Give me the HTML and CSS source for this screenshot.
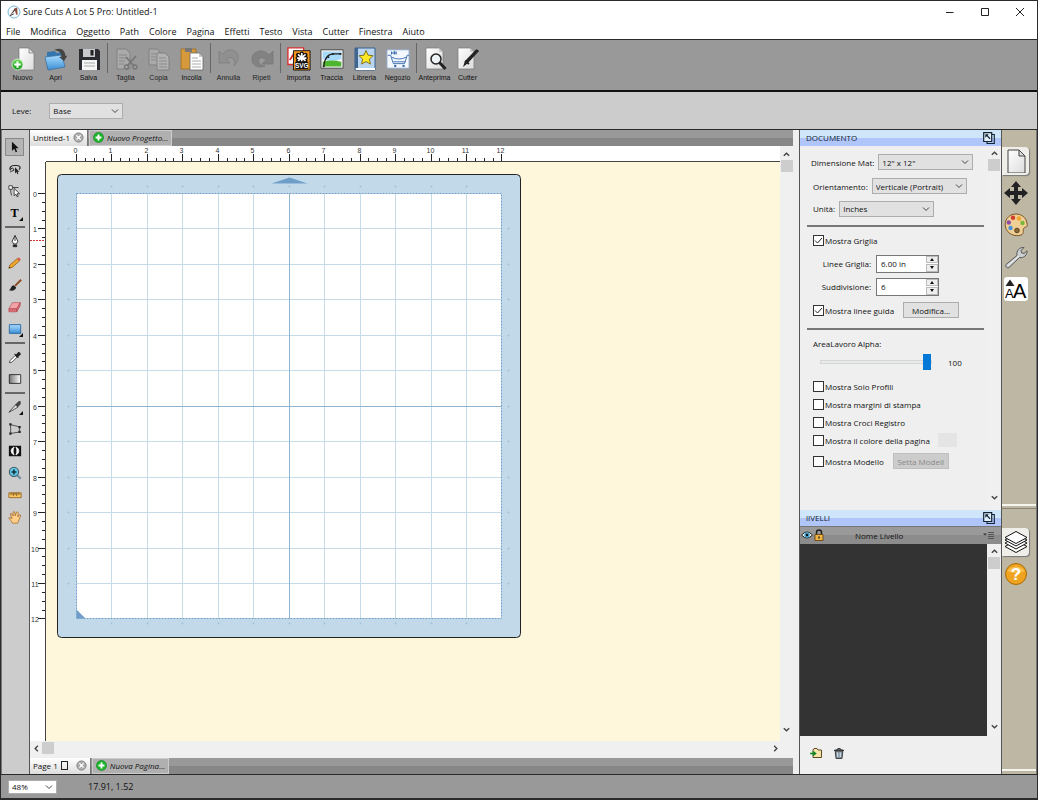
FILE: index.html
```html
<!DOCTYPE html>
<html lang="it">
<head>
  <meta charset="UTF-8" />
  <meta name="viewport" content="width=device-width, initial-scale=1.0"/>
  <title>Sure Cuts A Lot 5 Pro: Untitled-1</title>
  <link rel="stylesheet" href="styles.css">
</head>
<body>
  <!-- shared shapes -->
  <svg class="defs" width="0" height="0" aria-hidden="true">
    <defs>
      <linearGradient id="paper" x1="0" y1="0" x2="1" y2="1"><stop offset="0" stop-color="#fff"/><stop offset="1" stop-color="#dcdcdc"/></linearGradient>
      <linearGradient id="green" x1="0" y1="0" x2="0" y2="1"><stop offset="0" stop-color="#6fe05a"/><stop offset="1" stop-color="#14931c"/></linearGradient>
      <linearGradient id="blue" x1="0" y1="0" x2="0" y2="1"><stop offset="0" stop-color="#a9dcff"/><stop offset="1" stop-color="#3d8fd6"/></linearGradient>
      <linearGradient id="gray" x1="0" y1="0" x2="1" y2="0"><stop offset="0" stop-color="#777"/><stop offset="1" stop-color="#fff"/></linearGradient>
      <symbol id="close" viewBox="0 0 12 12"><circle cx="6" cy="6" r="5" fill="#b9b9b9" stroke="#777"/><path d="M3.7 3.7l4.6 4.6M8.3 3.7l-4.6 4.6" stroke="#777" stroke-width="3"/><path d="M3.7 3.7l4.6 4.6M8.3 3.7l-4.6 4.6" stroke="#fff" stroke-width="1.6"/></symbol>
      <symbol id="plus" viewBox="0 0 12 12"><circle cx="6" cy="6" r="5.5" fill="#1db52c" stroke="#0d7a1a" stroke-width=".6"/><path d="M6 2.8v6.4M2.8 6h6.4" stroke="#fff" stroke-width="2"/></symbol>
      <symbol id="undock" viewBox="0 0 12 12"><path d="M9 2.5h2.3v9H4V10" fill="none" stroke="#123" stroke-width="1.1"/><path d="M.7.7h8v8.8h-8z" fill="#e4f0fb" stroke="#123" stroke-width="1.2"/><path d="M2.3 2.300h3.400L4.700 3.400l2.800 2.900-.9.9-2.800-2.900-1.500 1.400z" fill="#123"/></symbol>
      <symbol id="up" viewBox="0 0 10 10"><path d="M2 6.5l3-3 3 3" fill="none" stroke="#444" stroke-width="1.5"/></symbol>
      <symbol id="down" viewBox="0 0 10 10"><path d="M2 3.5l3 3 3-3" fill="none" stroke="#444" stroke-width="1.5"/></symbol>
    </defs>
  </svg>

  <div class="window">
    <header class="title-bar">
      <svg class="app-icon" viewBox="0 0 14 14"><circle cx="7" cy="7" r="6" fill="#f4fafd" stroke="#79b9d4"/><path d="M3 10.5L8 3l1.600 1z" fill="#5a3328"/><path d="M7.600 4l2.600-1.600.3 7.600-1.400-.4z" fill="#8c4a38"/><path d="M3 10.600l3.800-1.800" stroke="#333"/></svg>
      <span class="title">Sure Cuts A Lot 5 Pro: Untitled-1</span>
      <div class="window-buttons">
        <button aria-label="Riduci"><svg viewBox="0 0 10 10"><path d="M1 5.5h7.5" stroke="#222"/></svg></button>
        <button aria-label="Ingrandisci"><svg viewBox="0 0 10 10"><path d="M1.5 1.5h7v7h-7z" fill="none" stroke="#222"/></svg></button>
        <button aria-label="Chiudi"><svg viewBox="0 0 10 10"><path d="M1 1l8 8M9 1L1 9" stroke="#222"/></svg></button>
      </div>
    </header>

    <nav class="menu-bar">
      <button>File</button><button>Modifica</button><button>Oggetto</button><button>Path</button><button>Colore</button><button>Pagina</button><button>Effetti</button><button>Testo</button><button>Vista</button><button>Cutter</button><button>Finestra</button><button>Aiuto</button>
    </nav>

    <div class="toolbar">
      <button><svg viewBox="0 0 24 24"><path d="M8 1h10l5 5v17H8z" fill="url(#paper)" stroke="#777" stroke-width=".7"/><path d="M18 1v5h5z" fill="#ddd" stroke="#777" stroke-width=".7"/><circle cx="6.500" cy="17.500" r="5.500" fill="url(#green)" stroke="#e4f3dd" stroke-width=".8"/><path d="M6.500 14.300v6.400M3.300 17.500h6.400" stroke="#fff" stroke-width="2"/></svg>Nuovo</button>
      <button><svg viewBox="0 0 24 24"><path d="M3 5l8-1 1 2 8-1v15L3 22z" fill="#3576ae"/><path d="M1 10l17-2 3 12-17 3z" fill="url(#blue)" stroke="#376c9c" stroke-width=".7"/><path d="M10 3c7-3 11 0 11.500 6l2-.4L20 14l-5-4 2.500-.4C17 5.500 15 3.500 10 3z" fill="#444"/></svg>Apri</button>
      <button><svg viewBox="0 0 24 24"><path d="M2 2h19l2 2v19H2z" fill="#2b2c31"/><path d="M6 2h12v8H6z" fill="#c8cacd"/><path d="M13.500 3h3v5.500h-3z" fill="#222"/><path d="M5 13h15v10H5z" fill="#f5f5f5"/><path d="M7 16h11M7 19h11" stroke="#aaa"/></svg>Salva</button>
      <span class="sep"></span>
      <button disabled><svg viewBox="0 0 24 24"><path d="M3 2h9l4 4v16H3z" fill="#aaa" stroke="#818181"/><path d="M5 8h8M5 11h8M5 14h6M5 17h5" stroke="#888"/><path d="M22 9l-9 10M12 10l8 9" stroke="#777" stroke-width="1.800"/><circle cx="12.500" cy="20" r="2" fill="none" stroke="#777" stroke-width="1.400"/><circle cx="21" cy="20" r="2" fill="none" stroke="#777" stroke-width="1.400"/></svg>Taglia</button>
      <button disabled><svg viewBox="0 0 24 24"><path d="M2 2h8l3 3v13H2z" fill="#aaa" stroke="#818181"/><path d="M10 6h8l4 4v13H10z" fill="#b2b2b2" stroke="#818181"/><path d="M4 7h5M4 10h5M4 13h5M12 11h7M12 14h8M12 17h8M12 20h8" stroke="#8b8b8b"/></svg>Copia</button>
      <button><svg viewBox="0 0 24 24"><path d="M1 2h15v20H1z" fill="#d69a3c" stroke="#a36c1c" stroke-width=".8"/><path d="M5 1h7v4H5z" fill="#777"/><path d="M10 6h9l4 4v13H10z" fill="#fff" stroke="#666" stroke-width=".8"/><path d="M19 6v4h4z" fill="#ccc"/><path d="M12 11h6M12 14h9M12 17h9M12 20h9" stroke="#aaa"/></svg>Incolla</button>
      <span class="sep"></span>
      <button disabled><svg viewBox="0 0 24 24"><path d="M2 4v12h11l-3.500-3.500C14 8 19 11 17 19c7-7 5-16-4-16-3 0-5 1-7.500 4.500z" fill="#909090" stroke="#7f7f7f" stroke-width=".8"/></svg>Annulla</button>
      <button disabled><svg viewBox="0 0 24 24"><path d="M23 4v13H12l4-4c-4-4-9-2-7 3 1 2 3 3 6 3-7 3-14-1-13-8 1-7 11-10 17-3z" fill="#828282" stroke="#777" stroke-width=".8"/></svg>Ripeti</button>
      <span class="sep"></span>
      <button><svg viewBox="0 0 26 26"><path d="M1 1h17v18H1z" fill="#fff" stroke="#d93131" stroke-width="1.500"/><path d="M3 14L9 5" stroke="#d93131" stroke-width="2"/><path d="M7 4h18v21H7z" fill="#f39419" stroke="#111"/><path d="M16 7v8M12 8.500l8 6M20 8.500l-8 6M11.500 12h9" stroke="#111" stroke-width="4.500" stroke-linecap="round"/><path d="M16 7v8M12.500 8.500l7 6M19.500 8.500l-7 6M11.500 12h9" stroke="#fff" stroke-width="1.800" stroke-linecap="round"/><path d="M9 16h14v8H9z" fill="#111"/><text x="16" y="23" text-anchor="middle" class="svg-logo">SVG</text></svg>Importa</button>
      <button><svg viewBox="0 0 26 24"><path d="M1 2h24v20H1z" fill="#eee" stroke="#444"/><path d="M3 4h20v10H3z" fill="#a5dafa"/><path d="M3 12q10 4 20 0v3H3z" fill="#fff"/><path d="M3 15q10-3 20 0v5H3z" fill="#4eb62e"/><path d="M4 20C5 10 10 6.500 15 6.500h8" fill="none" stroke="#222" stroke-width="1.200"/><path d="M3 19h2v2H3zM21 5.500h2v2h-2zM13 5.500h2v2h-2zM8 9h2v2H8z" fill="#222"/></svg>Traccia</button>
      <button><svg viewBox="0 0 24 24"><path d="M2 1h20v22H2z" fill="#b9d5f0" stroke="#37608b"/><path d="M2 1h3v20H2z" fill="#40668f"/><path d="M3 21h19v2H3z" fill="#fff"/><path d="M13 3.500l2.100 4.700 5 .5-3.700 3.400 1 5-4.400-2.500-4.400 2.500 1-5L6 8.700l5-.5z" fill="#ffe924" stroke="#796a10" stroke-width=".9"/></svg>Libreria</button>
      <button><svg viewBox="0 0 26 24"><path d="M1 2h24v20H1z" fill="#f3f8fe" stroke="#8ba6c8"/><path d="M2 8h3l3 9h12l3-9h2M6 10q8 4 16 0M8 15h13" fill="none" stroke="#3c6cab"/><circle cx="10" cy="19.500" r="1.300" fill="#3c6cab"/><circle cx="19" cy="19.500" r="1.300" fill="#3c6cab"/><path d="M6 4v3M9 3v4M11 4v3M6 5.500h5" stroke="#3c6cab" stroke-width="1.200"/></svg>Negozio</button>
      <span class="sep"></span>
      <button><svg viewBox="0 0 24 24"><path d="M3 1h13l4 4v17H3z" fill="url(#paper)" stroke="#777" stroke-width=".7"/><path d="M16 1v4h4z" fill="#ccc"/><path d="M16.500 15.500l6 6.500" stroke="#222" stroke-width="3"/><circle cx="13" cy="12" r="5" fill="#eef4f6" fill-opacity=".8" stroke="#222" stroke-width="1.500"/></svg>Anteprima</button>
      <button><svg viewBox="0 0 24 24"><path d="M2 1h12l4 4v17H2z" fill="url(#paper)" stroke="#777" stroke-width=".7"/><path d="M14 1v4h4z" fill="#ccc"/><path d="M7 20l2-6L20 2.500q2-.5 3 1.500L12 16z" fill="#222"/><path d="M9 14l4 3" stroke="#222" stroke-width="2"/></svg>Cutter</button>
    </div>

    <div class="options-bar">
      <label for="leve">Leve:</label>
      <select id="leve"><option>Base</option></select>
    </div>

    <main class="main">
      <aside class="tools">
        <button class="active" aria-label="Selezione"><svg viewBox="0 0 16 16"><path d="M4.500 2v10.500l2.600-2.400 1.700 4 1.700-.7-1.700-3.900h3.500z" fill="#111"/></svg></button>
        <button aria-label="Lazo"><svg viewBox="0 0 16 16"><path d="M3 9.500C1 7 3 4 7 4h3c4 0 5 3 2.500 4.500" fill="none" stroke="#222" stroke-width="1.400"/><path d="M3 8q2-2 3.500 0T4 10.500l-1.500 1" fill="none" stroke="#222" stroke-width="1.100"/><path d="M8 6v7l1.700-1.500 1 2.500 1.200-.5-1-2.300H13z" fill="#222"/></svg></button>
        <button aria-label="Modifica nodi"><svg viewBox="0 0 16 16"><path d="M1 2h4v4H1z" fill="#fff" stroke="#333"/><path d="M3 6q0 4 1 7M5 4h7" fill="none" stroke="#333"/><path d="M7 5v8.500l2.100-1.900 1.300 3 1.300-.6-1.200-2.900h2.700z" fill="#fff" stroke="#222" stroke-width=".9"/></svg></button>
        <button class="more" aria-label="Testo"><svg viewBox="0 0 16 16"><text x="7.500" y="12.500" text-anchor="middle" class="tool-t">T</text></svg></button>
        <span class="sep"></span>
        <button aria-label="Penna"><svg viewBox="0 0 16 16"><path d="M8 1.500l3.300 6.800-1.700 3H6.400l-1.700-3z" fill="#fff" stroke="#222"/><path d="M8 2v6M6 12.500h4v2H6z" stroke="#222" fill="#222"/></svg></button>
        <button aria-label="Matita"><svg viewBox="0 0 16 16"><path d="M1 14l1-3.800L10.500 3 13 5.800 4.800 13z" fill="#eda52c" stroke="#8a5812" stroke-width=".8"/><path d="M10.500 3l1.800-1.500 2.500 2.700L13 5.800z" fill="#d55a4d"/><path d="M1 14l.5-1.800 1.500 1.200z" fill="#222"/></svg></button>
        <button aria-label="Pennello"><svg viewBox="0 0 16 16"><path d="M8 9l7-7" stroke="#8a4a1f" stroke-width="2.200"/><path d="M1 14c2 0 2-5.500 5.500-5.800l2.900 2.600C8 15 4 15 1 14z" fill="#222"/></svg></button>
        <button aria-label="Gomma"><svg viewBox="0 0 16 16"><path d="M1 10l4-7h9l-4 7z" fill="#f3a2a7" stroke="#b04751" stroke-width=".7"/><path d="M1 10h9v3.500H1zM10 10l4-7v3.500l-4 7z" fill="#dc6c75" stroke="#b04751" stroke-width=".7"/></svg></button>
        <button class="more" aria-label="Rettangolo"><svg viewBox="0 0 16 16"><path d="M1.500 3h13v10h-13z" fill="url(#blue)" stroke="#23629c"/></svg></button>
        <span class="sep"></span>
        <button aria-label="Contagocce"><svg viewBox="0 0 16 16"><path d="M1.500 14.500l1-2.500 6-6 2 2-6 6z" fill="#fff" stroke="#333" stroke-width=".9"/><path d="M7.500 4.500l4.500 4.300M9 6.500L12 3q2 0 2 2l-3.500 3z" fill="#222" stroke="#222" stroke-width="1.200"/></svg></button>
        <button aria-label="Gradiente"><svg viewBox="0 0 16 16"><path d="M1.500 3h13v10h-13z" fill="url(#gray)" stroke="#222"/></svg></button>
        <span class="sep"></span>
        <button class="more" aria-label="Coltello"><svg viewBox="0 0 16 16"><path d="M1 14L8.500 5.500l3 2.500-4 2.500z" fill="#ddd" stroke="#333" stroke-width=".9"/><path d="M8 5.500L12.500 1l2 .5v3L11.500 8z" fill="#444"/></svg></button>
        <button aria-label="Distorsione"><svg viewBox="0 0 16 16"><path d="M3 3l10 2.500v6L3 13z" fill="none" stroke="#333" stroke-width=".9"/><path d="M1.500 1.500H4V4H1.500zM12 4.500h2.500V7H12zM12 10h2.500v2.500H12zM1.500 12H4v2.500H1.500z" fill="#222"/></svg></button>
        <button aria-label="Deforma"><svg viewBox="0 0 16 16"><path d="M1 2h14v12H1z" fill="#111"/><path d="M7 3.500C2.500 5 2.500 11 7 12.500 5.500 10 5.500 6 7 3.500zM9 3.500c4.500 1.500 4.500 7.500 0 9 1.500-2.500 1.500-6.500 0-9z" fill="#fff" stroke="#fff" stroke-width=".8"/></svg></button>
        <button aria-label="Zoom"><svg viewBox="0 0 16 16"><path d="M10 10l4.500 4.500" stroke="#6b8fa3" stroke-width="2.500"/><circle cx="6.800" cy="6.800" r="5.300" fill="#5fc4dd" stroke="#456" stroke-width="1.200"/><path d="M6.800 4v5.600M4 6.800h5.600" stroke="#134" stroke-width="1.800"/></svg></button>
        <button aria-label="Misura"><svg viewBox="0 0 16 16"><path d="M1 5.500h14v5.500H1z" fill="#f7c663" stroke="#8f5a14" stroke-width=".9"/><path d="M3.500 5.500V8M6 5.500V9M8 5.500V8M10 5.500V9M12.500 5.500V8" stroke="#5b3808" stroke-width=".9"/></svg></button>
        <button aria-label="Mano"><svg viewBox="0 0 16 16"><path d="M5 15c-1-3-4-4.500-4-6 1-1 2.500.8 3.600 1L2.500 4.500q1-1.500 2 0L6 7 5.800 2.500q1-1.700 2 0l.5 4L9.700 2.500q1.500-1 2 .5L11.300 8l1.800-2.500q1.500-.3 1.200 1.500L12.500 11.500 11 15z" fill="#ffcf8a" stroke="#9b5f20" stroke-width=".8"/></svg></button>
      </aside>

      <section class="editor">
        <div class="tabs">
          <div class="tab">Untitled-1 <button aria-label="Chiudi Untitled-1"><svg><use href="#close"/></svg></button></div>
          <button class="new-tab"><svg><use href="#plus"/></svg>Nuovo Progetto...</button>
        </div>
        <div class="workspace">
          <svg class="ruler-top" id="rulerTop"></svg>
          <svg class="ruler-left" id="rulerLeft"></svg>
          <svg class="canvas" id="canvas"></svg>
          <div class="scroll-v"><svg><use href="#up"/></svg><span class="thumb"></span><svg><use href="#down"/></svg></div>
          <div class="scroll-h"><svg class="left"><use href="#up"/></svg><span class="thumb"></span><svg class="right"><use href="#up"/></svg></div>
        </div>
        <div class="tabs">
          <div class="tab">Page 1 <span class="page-shape"></span><button aria-label="Chiudi Page 1"><svg><use href="#close"/></svg></button></div>
          <button class="new-tab"><svg><use href="#plus"/></svg>Nuova Pagina...</button>
        </div>
      </section>

      <section class="panels">
        <div class="panel document">
          <div class="panel-head">DOCUMENTO <button aria-label="Sgancia"><svg><use href="#undock"/></svg></button></div>
          <div class="panel-body">
            <form class="form">
              <div class="row"><label for="mat">Dimensione Mat:</label><select id="mat"><option>12" x 12"</option></select></div>
              <div class="row"><label for="orient">Orientamento:</label><select id="orient"><option>Verticale (Portrait)</option></select></div>
              <div class="row unit"><label for="unit">Unità:</label><select id="unit"><option>Inches</option></select></div>
              <hr>
              <div class="row"><input type="checkbox" id="grid" checked><label for="grid">Mostra Griglia</label></div>
              <div class="row number"><label for="lines">Linee Griglia:</label><span class="spin"><input type="text" id="lines" value="6.00 in"><span class="arrows"><button type="button" aria-label="Aumenta"></button><button type="button" class="less" aria-label="Diminuisci"></button></span></span></div>
              <div class="row number"><label for="subdiv">Suddivisione:</label><span class="spin"><input type="text" id="subdiv" value="6"><span class="arrows"><button type="button" aria-label="Aumenta"></button><button type="button" class="less" aria-label="Diminuisci"></button></span></span></div>
              <div class="row"><input type="checkbox" id="guides" checked><label for="guides">Mostra linee guida</label><button type="button" class="btn">Modifica...</button></div>
              <hr>
              <div class="row"><label for="alpha">AreaLavoro Alpha:</label></div>
              <div class="row slider"><input type="range" id="alpha" min="0" max="100" value="100"><output for="alpha" id="alphaValue">100</output></div>
              <div class="row small"><input type="checkbox" id="outline"><label for="outline">Mostra Solo Profili</label></div>
              <div class="row small"><input type="checkbox" id="margins"><label for="margins">Mostra margini di stampa</label></div>
              <div class="row small"><input type="checkbox" id="marks"><label for="marks">Mostra Croci Registro</label></div>
              <div class="row small"><input type="checkbox" id="pageColor"><label for="pageColor">Mostra il colore della pagina</label><button type="button" class="swatch" aria-label="Colore della pagina"></button></div>
              <div class="row"><input type="checkbox" id="model"><label for="model">Mostra Modello</label><button type="button" class="btn" disabled>Setta Modell</button></div>
            </form>
            <div class="scroll-v"><svg><use href="#up"/></svg><span class="thumb"></span><svg><use href="#down"/></svg></div>
          </div>
        </div>
        <div class="panel layers">
          <div class="panel-head">lIVELLI <button aria-label="Sgancia"><svg><use href="#undock"/></svg></button></div>
          <div class="layer-head">
            <svg viewBox="0 0 12 12"><path d="M.5 6Q6 0 11.500 6 6 12 .5 6z" fill="#fff" stroke="#222"/><circle cx="6" cy="6" r="2.800" fill="#42a6cf"/><circle cx="6" cy="6" r="1.200" fill="#111"/></svg>
            <svg viewBox="0 0 12 12"><path d="M3.500 6V3.500q0-2.500 2.500-2.500t2.500 2.500V6" fill="none" stroke="#222" stroke-width="1.500"/><path d="M2 5.500h8v6H2z" fill="#f0b341" stroke="#5e3d08" stroke-width=".8"/><path d="M6 7.500v2" stroke="#222" stroke-width="1.500"/></svg>
            <span>Nome Livello</span>
            <svg viewBox="0 0 12 12"><path d="M0 4.500h4L2 6.500z" fill="#333"/><path d="M5 3.500h6M5 5.500h6M5 7.500h6M5 9.500h6" stroke="#555"/></svg>
          </div>
          <div class="panel-body">
            <div class="layer-list"></div>
            <div class="scroll-v"><svg><use href="#up"/></svg><span class="thumb"></span><svg><use href="#down"/></svg></div>
          </div>
          <div class="layer-tools">
            <button aria-label="Nuovo livello"><svg viewBox="0 0 12 12"><path d="M3 3l1-1.500h3L8 3h3.500v7.500H3z" fill="#f9e3ab" stroke="#5d4b22"/><path d="M0 6.500h5M3 4.500l2.500 2L3 8.500" fill="none" stroke="#118b25" stroke-width="1.600"/></svg></button>
            <button aria-label="Elimina livello"><svg viewBox="0 0 12 12"><path d="M2.200 4h7.600L9 11.500H3z" fill="#8796a3" stroke="#333" stroke-width=".9"/><path d="M1 3.500q5-3 10 0zM4.500 1.500h3" fill="#7f8b95" stroke="#333" stroke-width=".9"/><path d="M4.700 5.500v4.500M7.300 5.500v4.500" stroke="#d2e3ef"/></svg></button>
          </div>
        </div>
      </section>

      <nav class="side">
        <div class="side-group document">
          <button class="active" aria-label="Documento"><svg viewBox="0 0 24 24"><path d="M4 1h11l6 6v17H4z" fill="url(#paper)" stroke="#444"/><path d="M15 1v6h6z" fill="#ddd" stroke="#444"/></svg></button>
          <button aria-label="Posizione"><svg viewBox="0 0 24 24"><path d="M12 0l5 6h-3v4h4V7l6 5-6 5v-3h-4v4h3l-5 6-5-6h3v-4H6v3l-6-5 6-5v3h4V6H7z" fill="#222"/></svg></button>
          <button aria-label="Colori"><svg viewBox="0 0 24 24"><path d="M12 1C4 1 0 8 1.500 14 3 21 11 24 17 22c4-1.500 1-5 3-7 1.500-1.500 4 0 3-5-1-6-6-9-11-9z" fill="#f0cf95" stroke="#7a5425"/><circle cx="9" cy="4.800" r="2.200" fill="#d33d2d"/><circle cx="4.800" cy="9.500" r="2.200" fill="#8b4aa5"/><circle cx="6.500" cy="15" r="2.200" fill="#4a93dc"/><circle cx="15" cy="5.500" r="2.200" fill="#eda62e"/><circle cx="18.500" cy="10" r="2.200" fill="#78b83c"/><circle cx="13" cy="17.500" r="2.300" fill="#8a6b3a" stroke="#5d421b"/></svg></button>
          <button aria-label="Strumenti"><svg viewBox="0 0 24 24"><path d="M2 19.500L13 10.500C12 6 15.500 2 20 2.500L17 5.500l.6 2.400 2.500.6L23 5.800c.5 4.200-3.500 7.700-7.500 6.700L5 22.500c-2 1-4-1-3-3z" fill="#ccd0d2" stroke="#555"/><path d="M4 20.500L15 11" stroke="#f4f4f4"/></svg></button>
          <button aria-label="Testo"><svg viewBox="0 0 24 24"><rect width="24" height="24" rx="3" fill="#fff"/><path d="M1.500 9L6 2.500 10.500 9z" fill="#222"/><text x="1" y="21" class="small-a">A</text><text x="9" y="21" class="large-a">A</text></svg></button>
        </div>
        <div class="side-group">
          <button class="active" aria-label="Livelli"><svg viewBox="0 0 24 24"><g fill="#fff" stroke="#111"><path d="M1 16.500l11-6 11 6-11 6z"/><path d="M1 13l11-6 11 6-11 6z"/><path d="M1 10l11-6 11 6-11 6z"/><path d="M1 7.500l11-6 11 6-11 6z"/></g></svg></button>
          <button aria-label="Guida"><svg viewBox="0 0 24 24"><circle cx="12" cy="12" r="10.500" fill="#efa21d" stroke="#a86a08"/><path d="M3 9q9-9 18 0-9 4-18 0z" fill="#f7bf50"/><text x="12" y="18" text-anchor="middle" class="help-mark">?</text></svg></button>
        </div>
      </nav>
    </main>

    <footer class="status-bar">
      <select aria-label="Zoom"><option>48%</option></select>
      <span>17.91, 1.52</span>
    </footer>
  </div>

  <script src="script.js"></script>
</body>
</html>
```

FILE: styles.css
```css
:root {
  --frame: #2b2b2b;
  --bar: #999;
  --bar-light: #ccc;
  --panel-bg: #efefef;
  --side-bg: #bdb7a4;
  --canvas-bg: #fff7dc;
  --mat: #c2d9ea;
  --grid: #c6dce9;
  --accent: #6f9fc8;
  --control: #e1e1e1;
  --control-border: #adadad;
}

* {
  box-sizing: border-box;
}

body {
  margin: 0;
  font-family: "Open Sans", "Noto Sans", sans-serif;
  font-size: 8px;
  color: #111;
}

button, select, input {
  font: inherit;
  color: inherit;
}

button {
  padding: 0;
  border: none;
  background: none;
}

svg {
  display: block;
  flex: none;
}

.defs {
  position: absolute;
}

.window {
  display: flex;
  flex-direction: column;
  height: 100vh;
  border: 1px solid var(--frame);
  border-bottom-width: 2px;
  background: #fff;
}

/* title and menu */
.title-bar {
  display: flex;
  align-items: center;
  height: 21px;
  padding-left: 6px;
  font-size: 9px;
}

.app-icon {
  width: 14px;
  height: 14px;
  margin-right: 2px;
}

.window-buttons {
  display: flex;
  margin-left: auto;
}

.window-buttons button {
  display: flex;
  justify-content: center;
  width: 35px;
}

.window-buttons svg {
  width: 10px;
  height: 10px;
}

.menu-bar {
  display: flex;
  gap: 10px;
  height: 17px;
  padding: 1px 5px 0;
  font-size: 9px;
}

/* main toolbar */
.toolbar {
  display: flex;
  height: 53px;
  padding: 7px 5px 0;
  border-top: 1px solid var(--frame);
  border-bottom: 2px solid #111;
  background: var(--bar);
  font-family: "Liberation Sans", Arial, sans-serif;
  font-size: 7px;
}

.toolbar button {
  display: flex;
  flex-direction: column;
  align-items: center;
  gap: 3px;
  width: 33px;
  line-height: 8px;
}

.toolbar button:disabled {
  color: #222;
}

.toolbar svg {
  width: 24px;
  height: 24px;
}

.toolbar .sep {
  width: 1px;
  height: 30px;
  margin: -4px 1px 0 2px;
  background: #666;
}

.svg-logo {
  font: bold 7px "Liberation Sans", Arial, sans-serif;
  fill: #fff;
}

.options-bar {
  display: flex;
  align-items: center;
  gap: 18px;
  height: 37px;
  padding-left: 11px;
  background: var(--bar-light);
}

select {
  appearance: none;
  height: 16px;
  padding: 0 14px 0 3px;
  border: 1px solid var(--control-border);
  border-radius: 0;
  background: var(--control) url("data:image/svg+xml,%3Csvg xmlns='http://www.w3.org/2000/svg' width='8' height='8'%3E%3Cpath d='M1 2.500l3 3 3-3' fill='none' stroke='%23444'/%3E%3C/svg%3E") no-repeat right 3px center;
}

.options-bar select {
  width: 74px;
}

.main {
  display: flex;
  flex: 1;
  min-height: 0;
  border-top: 1px solid var(--frame);
  border-bottom: 1px solid var(--frame);
  background: var(--panel-bg);
}

/* left tools */
.tools {
  display: flex;
  flex-direction: column;
  align-items: center;
  gap: 4px;
  width: 29px;
  padding: 8px 2px 0 0;
  border-left: 1px solid #777;
  border-right: 1px solid #555;
  background: var(--bar-light);
}

.tools button {
  position: relative;
  display: flex;
  align-items: center;
  justify-content: center;
  width: 19px;
  height: 18px;
  border: 1px solid transparent;
}

.tools button.active {
  border-color: #888;
  background: #b5b5b5;
}

.tools svg {
  width: 14px;
  height: 14px;
}

.tools .more::after {
  content: "";
  position: absolute;
  right: 0;
  bottom: 0;
  border: 2px solid #111;
  border-top-color: transparent;
  border-left-color: transparent;
}

.tools .sep {
  width: 20px;
  height: 2px;
  background: #666;
}

.tool-t {
  font: bold 14px "Liberation Serif", serif;
}

/* editor */
.editor {
  display: flex;
  flex-direction: column;
  flex: 1;
  min-width: 0;
}

.tabs {
  display: flex;
  gap: 1px;
  height: 16px;
  background: linear-gradient(#999 50%, #878787 50%);
}

.tab {
  display: flex;
  align-items: center;
  gap: 3px;
  padding: 0 3px 1px;
  border-right: 1px solid #777;
  background: linear-gradient(#fff, #ddd);
}

.tabs svg {
  width: 11px;
  height: 11px;
}

.new-tab {
  display: flex;
  align-items: center;
  gap: 3px;
  padding: 0 3px 1px;
  border: 1px solid #ccc;
  background: #b0b0b0;
  font-style: italic;
}

.page-shape {
  width: 7px;
  height: 9px;
  margin-right: 5px;
  border: 1px solid #222;
}

.workspace {
  display: grid;
  grid-template-columns: 16px 1fr 13px;
  grid-template-rows: 16px 1fr 14px;
  flex: 1;
  min-height: 0;
  margin-bottom: 3px;
  background: #fff;
}

.ruler-top {
  grid-area: 1 / 2;
  width: 100%;
  height: 16px;
  border-bottom: 1px solid #444;
}

.ruler-left {
  grid-area: 2 / 1;
  width: 16px;
  height: 100%;
  border-right: 1px solid #444;
}

.ruler-top text, .ruler-left text {
  font: 7px "Liberation Sans", Arial, sans-serif;
  text-anchor: middle;
  fill: #333;
}

.tick {
  stroke: #222;
}

.cursor-mark {
  stroke: #c33;
  stroke-dasharray: 2 1;
}

.canvas {
  grid-area: 2 / 2;
  width: 100%;
  height: 100%;
  background: var(--canvas-bg);
}

.mat {
  fill: var(--mat);
  stroke: #222;
}

.sheet {
  fill: #fff;
}

.sheet-edge {
  fill: none;
  stroke: var(--accent);
  stroke-dasharray: 2 1;
}

.grid-line {
  stroke: var(--grid);
}

.center-line {
  stroke: #8fb4d0;
}

.marker {
  fill: var(--accent);
}

.dot {
  fill: #a2bfd6;
}

.scroll-v, .scroll-h {
  display: flex;
  align-items: center;
  background: #f0f0f0;
}

.scroll-v {
  flex: none;
  flex-direction: column;
  width: 13px;
  padding: 3px 0 5px;
}

.workspace .scroll-v {
  grid-area: 1 / 3 / 3 / 4;
  padding: 4px 0 7px;
}

.workspace .scroll-h {
  grid-area: 3 / 1 / 4 / 4;
  padding: 0 13px 0 2px;
}

.scroll-v svg, .scroll-h svg {
  width: 9px;
  height: 9px;
}

.scroll-v svg:last-child {
  margin-top: auto;
}

.scroll-h .left {
  transform: rotate(-90deg);
}

.scroll-h .right {
  margin-left: auto;
  transform: rotate(90deg);
}

.thumb {
  width: 12px;
  height: 12px;
  margin: 1px;
  background: #cdcdcd;
}

/* right panels */
.panels {
  display: flex;
  flex-direction: column;
  width: 209px;
  padding-left: 6px;
}

.panel {
  display: flex;
  flex-direction: column;
  border-left: 1px solid #555;
  border-right: 1px solid #555;
}

.panel.document {
  height: 380px;
}

.panel.layers {
  flex: 1;
  min-height: 0;
}

.panel-head {
  display: flex;
  align-items: center;
  justify-content: space-between;
  height: 16px;
  padding: 0 6px 1px;
  background: linear-gradient(#cfe6fa 50%, #b0c6fb 50%);
  color: #123;
}

.panel-head svg {
  width: 12px;
  height: 12px;
}

.panel-body {
  display: flex;
  flex: 1;
  min-height: 0;
}

.panel .scroll-v {
  width: 14px;
}

.document .scroll-v {
  padding-bottom: 8px;
}

.form {
  flex: 1;
  min-width: 0;
  padding: 4px 3px 0 7px;
}

.row {
  display: flex;
  align-items: center;
  height: 24px;
  padding-left: 6px;
}

.row select {
  width: 95px;
  margin-left: 4px;
}

.row:nth-child(1) {
  padding-left: 4px;
}

.row.unit {
  height: 21px;
}

.row.number {
  height: 23px;
}

.row.small {
  height: 18px;
}

hr {
  height: 2px;
  margin: 6px 0 1px;
  border: none;
  background: #777;
}

input[type="checkbox"] {
  appearance: none;
  width: 11px;
  height: 11px;
  margin: 0 1px 0 0;
  border: 1px solid #333;
  background: #fff;
}

input[type="checkbox"]:checked {
  background: #fff url("data:image/svg+xml,%3Csvg xmlns='http://www.w3.org/2000/svg' width='9' height='9'%3E%3Cpath d='M1 4.500l2.500 2.500L8 2' fill='none' stroke='%23222'/%3E%3C/svg%3E") center;
}

.number label {
  width: 58px;
  text-align: right;
}

.spin {
  display: flex;
  width: 63px;
  height: 18px;
  margin-left: 5px;
  border: 1px solid #777;
  background: #fff;
}

.spin input {
  flex: 1;
  min-width: 0;
  padding: 0 4px;
  border: none;
  background: none;
}

.arrows {
  display: flex;
  flex-direction: column;
  gap: 1px;
  width: 12px;
}

.arrows button {
  display: flex;
  align-items: center;
  justify-content: center;
  flex: 1;
  border: 1px solid #bbb;
  background: #eee;
}

.arrows button::before {
  content: "";
  border: 2px solid transparent;
  border-top-width: 0;
  border-bottom: 3px solid #111;
}

.arrows .less::before {
  border-top: 3px solid #111;
  border-bottom-width: 0;
}

.btn {
  width: 56px;
  height: 16px;
  margin-left: 9px;
  border: 1px solid var(--control-border);
  background: var(--control);
}

.btn:disabled {
  border-color: #bfbfbf;
  background: #ccc;
  color: #888;
}

.swatch {
  width: 19px;
  height: 14px;
  margin-left: 8px;
  background: #e4e4e4;
}

.slider {
  gap: 16px;
  margin: -5px 0 3px;
  padding-left: 13px;
}

input[type="range"] {
  appearance: none;
  width: 112px;
  height: 16px;
  margin: 0;
  background: none;
}

input[type="range"]::-webkit-slider-runnable-track {
  height: 4px;
  border: 1px solid #d6d6d6;
  background: #e7eaea;
}

input[type="range"]::-webkit-slider-thumb {
  appearance: none;
  width: 8px;
  height: 16px;
  margin-top: -7px;
  background: #0078d7;
}

.layer-head {
  display: flex;
  align-items: center;
  height: 18px;
  padding: 0 6px 1px 1px;
  border-top: 1px solid #777;
  background: linear-gradient(#999 50%, #8c8c8c 50%);
}

.layer-head svg {
  width: 12px;
  height: 12px;
}

.layer-head span {
  flex: 1;
  padding-left: 30px;
}

.layer-list {
  flex: 1;
  background: #333;
}

.layer-tools {
  display: flex;
  gap: 11px;
  height: 38px;
  padding: 0 10px 4px;
}

.layer-tools svg {
  width: 12px;
  height: 12px;
}

/* far right tab strip */
.side {
  display: flex;
  flex-direction: column;
  width: 35px;
  padding-bottom: 3px;
  border-right: 1px solid #777;
  background: var(--side-bg);
}

.side-group {
  display: flex;
  flex-direction: column;
  align-items: flex-start;
  gap: 4px;
  flex: 1;
  padding-top: 19px;
  border-top: 1px solid #8a8577;
  border-bottom: 2px solid #f5f4ee;
}

.side-group.document {
  flex: none;
  height: 376px;
  margin-bottom: 2px;
  padding-top: 17px;
  border-top: none;
}

.side button {
  display: flex;
  align-items: center;
  justify-content: center;
  width: 27px;
  height: 28px;
  border-radius: 0 4px 4px 0;
}

.side button.active {
  background: #efeee8;
  box-shadow: 1px 1px 1px #777;
}

.side svg {
  width: 24px;
  height: 24px;
}

.small-a, .large-a {
  font: 13px "Liberation Sans", Arial, sans-serif;
}

.large-a {
  font-size: 20px;
}

.help-mark {
  font: bold 17px "Liberation Sans", Arial, sans-serif;
  fill: #fff;
}

/* status bar */
.status-bar {
  display: flex;
  align-items: center;
  gap: 31px;
  height: 23px;
  padding-left: 7px;
  background: var(--bar);
  font-size: 9px;
}

.status-bar select {
  width: 49px;
  height: 14px;
  background-color: #fff;
  font-size: 8px;
}
```

FILE: script.js
```js
const SVG_NS = 'http://www.w3.org/2000/svg';
const UNIT = 35.45;      // one inch at 48%
const SIZE = 12;
const origin = { x: 30.5, y: 31.5 };

const rulerTop = document.getElementById('rulerTop');
const rulerLeft = document.getElementById('rulerLeft');
const canvas = document.getElementById('canvas');

function draw(parent, tag, attrs, text) {
  const el = document.createElementNS(SVG_NS, tag);
  for (const name in attrs) {
    el.setAttribute(name, attrs[name]);
  }
  if (text !== undefined) el.textContent = text;
  parent.appendChild(el);
}

function line(parent, cls, x1, y1, x2, y2) {
  draw(parent, 'line', { class: cls, x1, y1, x2, y2 });
}

// snap to the pixel centre so lines stay sharp
function snap(value) {
  return Math.floor(value) + 0.5;
}

function drawRulers() {
  for (let i = 0; i <= SIZE * 4; i++) {
    const x = snap(origin.x + i * UNIT / 4);
    const y = snap(origin.y + i * UNIT / 4);
    const major = i % 4 === 0;
    line(rulerTop, 'tick', x, major ? 8 : 12, x, 15);
    line(rulerLeft, 'tick', major ? 8 : 12, y, 15, y);
    if (major) {
      draw(rulerTop, 'text', { x: x - 1, y: 7 }, i / 4);
      draw(rulerLeft, 'text', { x: 5, y: y + 3 }, i / 4);
    }
  }
  line(rulerLeft, 'cursor-mark', 0, 78.5, 15, 78.5);
}

function drawMat() {
  const { x, y } = origin;
  const right = snap(x + SIZE * UNIT);
  const bottom = snap(y + SIZE * UNIT);
  const side = right - x;

  draw(canvas, 'rect', { class: 'mat', x: x - 19, y: y - 19, width: side + 38, height: side + 38, rx: 4 });
  draw(canvas, 'rect', { class: 'sheet', x, y, width: side, height: side });

  for (let i = 1; i < SIZE; i++) {
    const gx = snap(x + i * UNIT);
    const gy = snap(y + i * UNIT);
    line(canvas, 'grid-line', gx, y, gx, bottom);
    line(canvas, 'grid-line', x, gy, right, gy);
    [[gx, y - 7], [gx, bottom + 5], [x - 8, gy], [right + 7, gy]].forEach(([cx, cy]) => {
      draw(canvas, 'circle', { class: 'dot', cx, cy, r: 1 });
    });
  }

  const cx = snap(x + SIZE / 2 * UNIT);
  const cy = snap(y + SIZE / 2 * UNIT);
  line(canvas, 'center-line', cx, y, cx, bottom);
  line(canvas, 'center-line', x, cy, right, cy);

  draw(canvas, 'rect', { class: 'sheet-edge', x, y, width: side, height: side });
  draw(canvas, 'path', { class: 'marker', d: `M${cx - 18} ${y - 10}L${cx} ${y - 16}L${cx + 18} ${y - 10}z` });
  draw(canvas, 'path', { class: 'marker', d: `M${x} ${bottom - 9}L${x + 9} ${bottom}H${x}z` });
}

drawRulers();
drawMat();

const alpha = document.getElementById('alpha');
alpha.addEventListener('input', () => {
  document.getElementById('alphaValue').textContent = alpha.value;
});
```
